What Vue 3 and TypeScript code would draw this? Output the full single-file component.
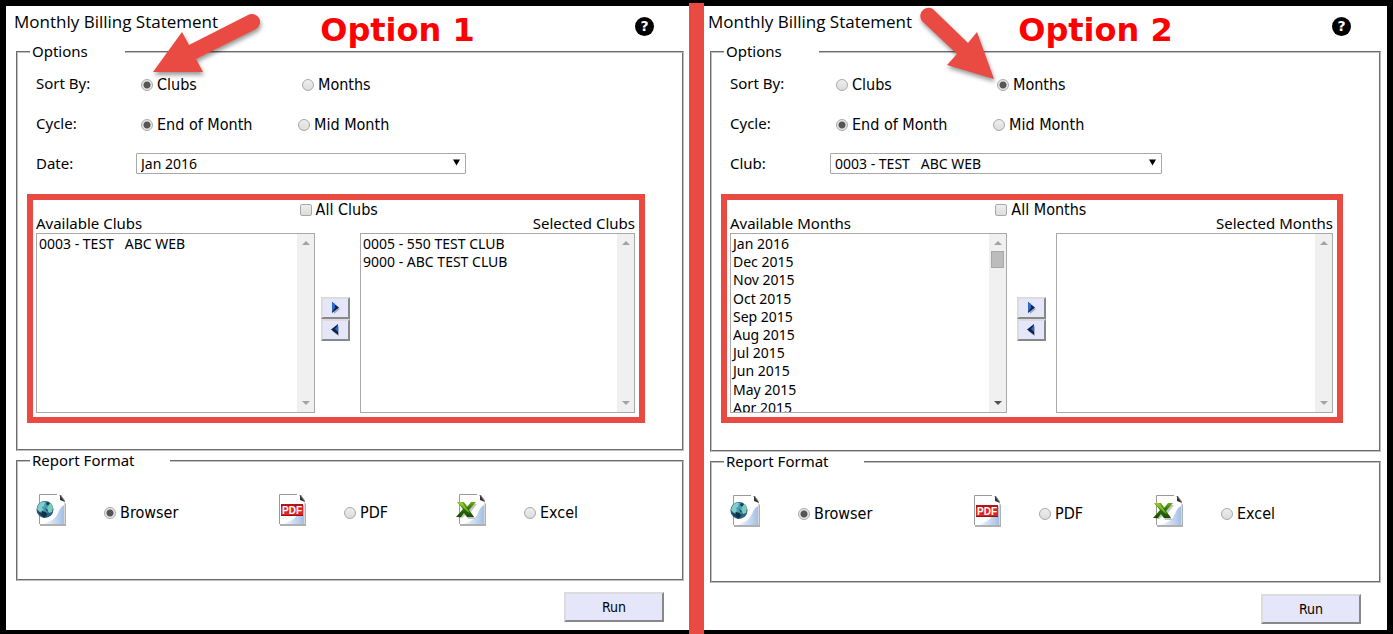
<script setup lang="ts">
import { reactive } from 'vue'

interface Panel {
  id: string
  annotation: string
  sort: 'Clubs' | 'Months'
  cycle: string
  pickerLabel: string
  pickerValue: string
  noun: string
  available: string[]
  selected: string[]
  format: string
}

const gap = '\u00a0\u00a0\u00a0'

const panels = reactive<Panel[]>([
  {
    id: 'one',
    annotation: 'Option 1',
    sort: 'Clubs',
    cycle: 'End of Month',
    pickerLabel: 'Date:',
    pickerValue: 'Jan 2016',
    noun: 'Clubs',
    available: [`0003 - TEST${gap}ABC WEB`],
    selected: ['0005 - 550 TEST CLUB', '9000 - ABC TEST CLUB'],
    format: 'Browser',
  },
  {
    id: 'two',
    annotation: 'Option 2',
    sort: 'Months',
    cycle: 'End of Month',
    pickerLabel: 'Club:',
    pickerValue: `0003 - TEST${gap}ABC WEB`,
    noun: 'Months',
    available: [
      'Jan 2016', 'Dec 2015', 'Nov 2015', 'Oct 2015', 'Sep 2015',
      'Aug 2015', 'Jul 2015', 'Jun 2015', 'May 2015', 'Apr 2015',
    ],
    selected: [],
    format: 'Browser',
  },
])

const sorts = ['Clubs', 'Months']
const cycles = ['End of Month', 'Mid Month']
const formats = ['Browser', 'PDF', 'Excel']
</script>

<template>
  <main class="page">
    <form v-for="p in panels" :key="p.id" class="panel" :class="p.id" @submit.prevent>
      <header class="top">
        <h1>Monthly Billing Statement</h1>
        <button type="button" class="help" aria-label="Help">?</button>
      </header>

      <fieldset class="options">
        <legend>Options</legend>
        <div class="row" role="radiogroup" aria-label="Sort By">
          <span class="caption">Sort By:</span>
          <div class="choices sort">
            <label v-for="s in sorts" :key="s" class="choice">
              <input v-model="p.sort" type="radio" :name="`sort-${p.id}`" :value="s" />{{ s }}
            </label>
          </div>
        </div>
        <div class="row" role="radiogroup" aria-label="Cycle">
          <span class="caption">Cycle:</span>
          <div class="choices cycle">
            <label v-for="c in cycles" :key="c" class="choice">
              <input v-model="p.cycle" type="radio" :name="`cycle-${p.id}`" :value="c" />{{ c }}
            </label>
          </div>
        </div>
        <div class="row">
          <label class="caption" :for="`picker-${p.id}`">{{ p.pickerLabel }}</label>
          <div class="picker">
            <select :id="`picker-${p.id}`">
              <option>{{ p.pickerValue }}</option>
            </select>
            <svg class="caret" viewBox="0 0 7 7" aria-hidden="true"><path d="M0 0.5h7L3.5 6.5z" /></svg>
          </div>
        </div>

        <section class="transfer">
          <div class="heads">
            <label class="list-name" :for="`available-${p.id}`">Available {{ p.noun }}</label>
            <label class="choice all"><input type="checkbox" />All {{ p.noun }}</label>
            <label class="list-name end" :for="`selected-${p.id}`">Selected {{ p.noun }}</label>
          </div>
          <div class="lists">
            <div class="listbox">
              <select :id="`available-${p.id}`" multiple>
                <option v-for="o in p.available" :key="o">{{ o }}</option>
              </select>
              <div class="bar" :class="{ live: p.available.length > 9 }">
                <svg class="up" viewBox="0 0 8 4"><path d="M0 4L4 0l4 4z" /></svg>
                <span class="thumb"></span>
                <svg class="down" viewBox="0 0 8 4"><path d="M0 0h8L4 4z" /></svg>
              </div>
            </div>
            <div class="moves">
              <button type="button" aria-label="Add">
                <svg viewBox="0 0 9 12">
                  <path class="shade" d="M2 2l7 5-6 5z" />
                  <path class="far" d="M1 0l7 5.5L1 11z" />
                  <path class="near" d="M1 0l3 2v4L1 10z" />
                </svg>
              </button>
              <button type="button" aria-label="Remove">
                <svg viewBox="0 0 9 12">
                  <path class="shade" d="M8 2L1 7l7 5z" />
                  <path class="far" d="M7 0L0 5.5 7 11z" />
                  <path class="near" d="M7 1v7L4 5z" />
                </svg>
              </button>
            </div>
            <div class="listbox">
              <select :id="`selected-${p.id}`" multiple>
                <option v-for="o in p.selected" :key="o">{{ o }}</option>
              </select>
              <div class="bar">
                <svg class="up" viewBox="0 0 8 4"><path d="M0 4L4 0l4 4z" /></svg>
                <span class="thumb"></span>
                <svg class="down" viewBox="0 0 8 4"><path d="M0 0h8L4 4z" /></svg>
              </div>
            </div>
          </div>
        </section>
      </fieldset>

      <fieldset class="report">
        <legend>Report Format</legend>
        <div class="formats">
          <div v-for="f in formats" :key="f" class="format">
            <svg class="doc" viewBox="0 0 32 34" aria-hidden="true">
              <defs>
                <linearGradient :id="`page-${p.id}-${f}`" x1="0" y1="0" x2="1" y2="0">
                  <stop offset="0" stop-color="#fff" />
                  <stop offset="1" stop-color="#a3bfe6" />
                </linearGradient>
                <linearGradient :id="`leaf-${p.id}-${f}`" x1="0" y1="0" x2="0" y2="1">
                  <stop offset="0" stop-color="#6fae14" />
                  <stop offset="0.4" stop-color="#2f7a05" />
                  <stop offset="1" stop-color="#174d02" />
                </linearGradient>
              </defs>
              <path d="M4 4h20l6 7v22H4z" fill="#b0b0b0" />
              <path d="M3.500 1.500h18l7 7V31h-25z" fill="#fff" />
              <path d="M21 1.500H3.500V31" fill="none" stroke="#9a9a9a" />
              <path d="M28 12v19H6Q19 28 22 20q2-6 6-8z" :fill="`url(#page-${p.id}-${f})`" />
              <path d="M23 2l6 7v-1.500L25 2z" fill="#888" />
              <path d="M24 2l5 7-5-2z" fill="#333" />
              <g v-if="f === 'Browser'">
                <circle cx="9" cy="16.500" r="8.500" fill="#2b6080" />
                <circle cx="8" cy="14.500" r="6" fill="#4a9db4" />
                <path d="M2 13q3-5 7-4l-1 4-2 1 1 3-3 2-3-3z" fill="#7fcfc8" />
                <path d="M11 11l4-1 2 4-1 5-3 1-2-4 1-2z" fill="#79cdb7" />
                <path d="M6 18l4 1 1 3-3 3-3-3z" fill="#0d3346" />
                <path d="M11 9l3 1-2 3-2-2zM1 18l4 2v3zM9 15l3 2-1 2z" fill="#163f5c" />
              </g>
              <g v-else-if="f === 'PDF'">
                <rect x="5" y="11" width="22" height="12" fill="#e02424" />
                <path d="M5 12.500h22" stroke="#b41414" stroke-width="3" />
                <path d="M5 22.500h22" stroke="#8f1010" />
                <text x="16" y="21" text-anchor="middle" class="pdf">PDF</text>
              </g>
              <g v-else>
                <path d="M3 11h7l3 4 4-4h4l-6 8 4 7h-7l-2-4-4 3H2l7-7z" fill="#555" opacity=".35" />
                <path d="M1 9h7l3 5 4-5h5l-7 8 5 7h-7l-3-4-3 4H0l7-8z" :fill="`url(#leaf-${p.id}-${f})`" />
                <path d="M1 9h5l8 11-2-1z" fill="#a2d435" opacity=".7" />
              </g>
            </svg>
            <label class="choice">
              <input v-model="p.format" type="radio" :name="`format-${p.id}`" :value="f" />{{ f }}
            </label>
          </div>
        </div>
      </fieldset>

      <div class="actions"><button type="submit" class="run">Run</button></div>

      <strong class="note">{{ p.annotation }}</strong>
      <svg v-if="p.id === 'one'" class="arrow" viewBox="0 0 120 80" aria-hidden="true">
        <path d="M3 62L32 22l7 13L98 5a8 8 0 0 1 8 14L46 49l7 13z" />
      </svg>
      <svg v-else class="arrow" viewBox="0 0 90 84" aria-hidden="true">
        <path d="M79 73L62 26l-9 11L20 5A8 8 0 0 0 7 15l35 33-10 11z" />
      </svg>
    </form>
    <div class="divider"></div>
  </main>
</template>

<style>
body {
  margin: 0;
  background: #000;
}
</style>

<style scoped>
* {
  box-sizing: border-box;
}

.page {
  display: grid;
  grid-template-columns: 1fr 15px 1fr;
  min-height: 100vh;
  padding: 6px 6px 5px;
  background: #000;
  color: #000;
  font: 15px/20px 'Noto Sans', sans-serif;
}

.panel {
  position: relative;
  grid-row: 1;
  min-width: 0;
  background: #fff;
}

.one {
  grid-column: 1;
  padding: 0 5px 0 10px;
}

.two {
  grid-column: 3;
  padding: 0 6px;
}

.divider {
  grid-column: 2;
  grid-row: 1;
  margin: -3px 0 -5px;
  background: #e94b43;
}

.top {
  display: flex;
  justify-content: space-between;
  align-items: flex-start;
  height: 36px;
  padding: 6px 30px 0 0;
}

h1 {
  margin: 0 -2px;
  font: 17px/20px 'Open Sans', sans-serif;
}

.help {
  width: 19px;
  height: 19px;
  margin-top: 5px;
  padding: 0;
  border: 0;
  border-radius: 50%;
  background: #000;
  color: #fff;
  font: bold 14px/19px 'DejaVu Sans', sans-serif;
  text-align: center;
}

fieldset {
  min-width: 0;
  margin: 0;
  padding: 1px 0 0 18px;
  border: 2px groove #c0c0c0;
}

legend {
  width: 95px;
  margin-left: -6px;
  padding: 0 2px 2px;
  line-height: 18px;
}

.options {
  padding-bottom: 26px;
}

.two .options {
  padding-bottom: 27px;
}

.row {
  display: grid;
  grid-template-columns: 100px 1fr;
  align-items: center;
  height: 40px;
}

.choices {
  display: grid;
  padding: 3px 0 0 5px;
}

.two .choices {
  padding-left: 6px;
}

.sort {
  grid-template-columns: 161px 1fr;
}

.cycle {
  grid-template-columns: 157px 1fr;
}

.choice {
  display: flex;
  align-items: center;
  gap: 4px;
  font: 16px/20px 'DejaVu Sans Condensed', 'DejaVu Sans', sans-serif;
  white-space: nowrap;
}

.choice input {
  flex: none;
  appearance: none;
  width: 12px;
  height: 12px;
  margin: 0;
  border: 1px solid #a9a9a9;
  border-radius: 50%;
  background: linear-gradient(#eee, #dcdcdc);
}

.choice input[type='checkbox'] {
  border-radius: 2px;
}

.choice input[type='radio']:checked {
  background: radial-gradient(circle, #555 0 3px, #e6e6e6 4px);
}

.picker {
  position: relative;
}

.one .picker {
  width: 330px;
  max-width: 90%;
}

.two .picker {
  width: 332px;
  max-width: 90%;
}

.picker select {
  display: block;
  appearance: none;
  width: 100%;
  height: 21px;
  padding: 0 4px;
  border: 1px solid #a9a9a9;
  border-radius: 1px;
  background: #fff;
  color: #000;
  font: 14px/19px 'Noto Sans', sans-serif;
}

.caret {
  position: absolute;
  top: 6px;
  right: 6px;
  width: 7px;
  height: 7px;
}

.transfer {
  margin: 11px 37px 0 -9px;
  padding: 0 4px 4px 3px;
  border: 6px solid #e94b43;
}

.two .transfer {
  margin-right: 36px;
}

.heads {
  display: grid;
  grid-template-columns: 44% auto 1fr;
  height: 33px;
}

.list-name {
  align-self: end;
  white-space: nowrap;
}

.end {
  justify-self: end;
}

.all {
  align-self: start;
}

.lists {
  display: grid;
  grid-template-columns: 279fr 45px 275fr;
}

.two .lists {
  grid-template-columns: 277fr 49px 277fr;
}

.listbox {
  display: flex;
  min-width: 0;
  height: 180px;
  border: 1px solid #a9a9a9;
}

.listbox select {
  flex: 1;
  min-width: 0;
  height: 178px;
  margin: 0;
  padding: 0;
  border: 0;
  border-radius: 0;
  outline: 0;
  overflow: hidden;
  background: #fff;
  color: #000;
  font: 14px/18px 'Noto Sans', sans-serif;
}

.listbox option {
  height: 1.3em;
  min-height: 0;
  padding: 0 2px;
}

.bar {
  display: flex;
  flex-direction: column;
  align-items: center;
  width: 17px;
  padding: 7px 0;
  background: #f0f0f0;
}

.bar svg {
  width: 8px;
  height: 4px;
  fill: #a3a3a3;
}

.bar .down {
  margin-top: auto;
}

.live .down {
  fill: #505050;
}

.live .thumb {
  width: 13px;
  height: 17px;
  margin-top: 6px;
  border: 1px solid #a8a8a8;
  background: #bcbcbc;
}

.moves {
  display: flex;
  flex-direction: column;
  justify-content: center;
  align-items: center;
  padding-bottom: 8px;
}

.one .moves {
  padding-right: 4px;
}

.moves button {
  display: flex;
  justify-content: center;
  align-items: center;
  width: 29px;
  height: 22px;
  padding: 0;
  border: 2px solid;
  border-color: #dcdcdc #888 #888 #dcdcdc;
  background: #e6e6fa;
}

.moves svg {
  width: 9px;
  height: 12px;
}

.shade {
  fill: #a9a9bd;
}

.near {
  fill: #2a6ac4;
}

.far {
  fill: #06264f;
}

.report {
  padding-bottom: 52px;
}

.two .report {
  padding-bottom: 53px;
}

.report legend {
  width: 140px;
}

.formats {
  display: grid;
  grid-template-columns: 240px 180px 1fr;
  padding-top: 21px;
}

.two .formats {
  grid-template-columns: 241px 182px 1fr;
}

.format {
  display: grid;
  grid-template-columns: 68px 1fr;
  align-items: center;
}

.format .choice {
  padding-top: 6px;
}

.doc {
  width: 32px;
  height: 34px;
}

.pdf {
  fill: #fff;
  font: bold 10px 'Liberation Sans', sans-serif;
}

.actions {
  display: flex;
  justify-content: flex-end;
  padding: 11px 20px 6px;
}

.run {
  width: 100px;
  height: 30px;
  border: 2px solid;
  border-color: #dcdcdc #888 #888 #dcdcdc;
  background: #e6e6fa;
  color: #000;
  font: 14px/20px 'DejaVu Sans Condensed', 'DejaVu Sans', sans-serif;
}

.note {
  position: absolute;
  top: 6px;
  left: 46%;
  color: #f00;
  font: bold 32px/36px 'DejaVu Sans', sans-serif;
  white-space: nowrap;
}

.arrow {
  position: absolute;
  top: 4px;
  left: 144px;
  width: 120px;
  height: 80px;
  fill: #e94b43;
  filter: drop-shadow(1px 3px 2px #0006);
  pointer-events: none;
}

.two .arrow {
  top: 0;
  left: 211px;
  width: 90px;
  height: 84px;
}
</style>
